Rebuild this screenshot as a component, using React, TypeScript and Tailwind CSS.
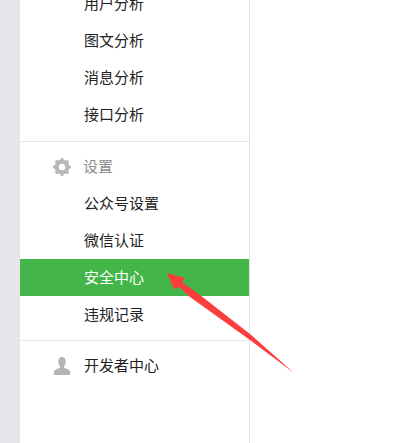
const rowText = "flex h-[37px] items-center pl-[64px] text-[15px] text-[#222222]";

const teeth = [0, 45, 90, 135];

function GearIcon() {
  return (
    <svg width="18" height="18" viewBox="0 0 18 18" className="shrink-0">
      <circle cx="9" cy="9" r="5.400" fill="none" stroke="#b8b8b8" strokeWidth="4.200" />
      {teeth.map((deg) => (
        <line
          key={deg}
          x1="9"
          y1="1.500"
          x2="9"
          y2="16.500"
          stroke="#b8b8b8"
          strokeWidth="3.200"
          strokeLinecap="round"
          transform={`rotate(${deg} 9 9)`}
          strokeDasharray="2 11 2"
        />
      ))}
    </svg>
  );
}

function UserIcon() {
  return (
    <svg width="16" height="18" viewBox="0 0 17 18" preserveAspectRatio="none" className="shrink-0">
      <path
        fill="#b4b4b4"
        d="M8.500 0c2.500 0 4 1.900 4 4.400 0 1.900-.8 3.600-1.900 4.600v1.400c.6.600 1.700 1 3.200 1.600 1.900.7 3.200 1.500 3.200 3V18H0v-3c0-1.500 1.300-2.300 3.200-3 1.500-.6 2.600-1 3.200-1.600V9C5.300 8 4.500 6.300 4.500 4.400 4.500 1.900 6 0 8.500 0z"
      />
    </svg>
  );
}

export default function App() {
  return (
    <div className="relative flex h-[443px] w-[415px] overflow-hidden bg-white font-['Noto_Sans_CJK_SC','Liberation_Sans',sans-serif]">
      <div className="w-[19px] shrink-0 bg-[#e5e7eb]" />
      <div className="w-[231px] shrink-0 border-x border-[#e4e4e4] bg-white">
        <div className="-mt-[15px] border-b border-[#e4e7eb] pb-2">
          <div className={rowText}>用户分析</div>
          <div className={rowText}>图文分析</div>
          <div className={rowText}>消息分析</div>
          <div className={rowText}>接口分析</div>
        </div>
        <div className="border-b border-[#e4e7eb] pt-[6px] pb-[7px]">
          <div className="flex h-[37px] items-center gap-[12px] pl-[33px] text-[15px] text-[#8d8d8d]">
            <GearIcon />
            <span>设置</span>
          </div>
          <div className={rowText}>公众号设置</div>
          <div className={rowText}>微信认证</div>
          <div className="flex h-[37px] items-center bg-[#44b549] pl-[64px] text-[15px] text-white">安全中心</div>
          <div className={rowText}>违规记录</div>
        </div>
        <div className="pt-[6px]">
          <div className="flex h-[37px] items-center gap-[14px] pl-[34px] text-[15px] text-[#222222]">
            <UserIcon />
            <span>开发者中心</span>
          </div>
        </div>
      </div>
      {/* annotation arrow drawn over the screenshot */}
      <svg width="415" height="443" viewBox="0 0 415 443" className="pointer-events-none absolute top-0 left-0">
        <polygon
          fill="#fb3d3d"
          points="167,273 185,278 182,282 200,295 250,334 294,373 250,340 190,297 179,287 174,289"
        />
      </svg>
    </div>
  );
}
